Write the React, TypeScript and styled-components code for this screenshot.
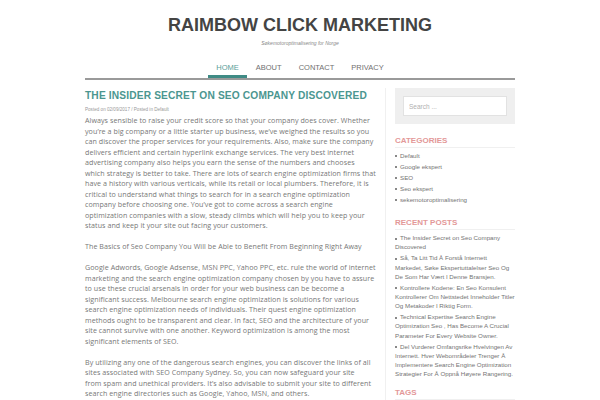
import React from "react";
import styled, { createGlobalStyle } from "styled-components";

const Global = createGlobalStyle`
  html, body { margin: 0; padding: 0; background: #fff; }
  body { overflow: hidden; font-family: "Open Sans", "Liberation Sans", sans-serif; }
  * { box-sizing: border-box; }
`;

const Page = styled.div`
  width: 430px;
  margin: 0 auto;
`;

const Header = styled.header`
  padding-top: 14px;
  text-align: center;
`;

const SiteTitle = styled.h1`
  margin: 0;
  font-family: "Liberation Sans", Arial, sans-serif;
  font-weight: 700;
  font-size: 18px;
  line-height: 22px;
  color: #444;
`;

const Tagline = styled.p`
  margin: 3px 0 0;
  font-family: "Liberation Sans", Arial, sans-serif;
  font-style: italic;
  font-size: 5px;
  line-height: 8px;
  color: #888;
`;

const Nav = styled.nav`
  margin-top: 11px;
  display: flex;
  justify-content: center;
  border-bottom: 2px solid #9a9a9a;
`;

const NavItem = styled.a<{ $active?: boolean }>`
  display: block;
  padding: 5px 8.5px 2px;
  line-height: 10px;
  font-family: "Liberation Sans", Arial, sans-serif;
  font-size: 7.5px;
  font-weight: 400;
  text-transform: uppercase;
  color: ${(p) => (p.$active ? "#5a9e99" : "#707070")};
  border-bottom: 3px solid ${(p) => (p.$active ? "#3f8b85" : "transparent")};
  text-decoration: none;
`;

const Main = styled.div`
  display: flex;
  margin-top: 8px;
`;

const Content = styled.article`
  width: 292px;
  flex: none;
`;

const PostTitle = styled.h2`
  margin: 1px 0 0;
  font-family: "Liberation Sans", Arial, sans-serif;
  font-weight: 700;
  font-size: 10.2px;
  line-height: 14px;
  letter-spacing: 0.15px;
  color: #4b9690;
  white-space: nowrap;
`;

const Meta = styled.div`
  margin-top: 3px;
  font-family: "Liberation Sans", Arial, sans-serif;
  font-size: 4.6px;
  line-height: 7px;
  color: #999;
`;

const Body = styled.div`
  margin-top: 2px;
  font-size: 7.12px;
  line-height: 10.5px;
  letter-spacing: 0.06px;
  color: #777;
  white-space: nowrap;
  p { margin: 0 0 10.5px; }
`;

const Sidebar = styled.aside`
  flex: 1;
  margin-left: 8px;
  border-left: 1px solid #f0f0f0;
  padding-left: 9px;
  font-family: "Liberation Sans", Arial, sans-serif;
`;

const SearchBox = styled.div`
  background: #efefef;
  padding: 8px;
  height: 36px;
`;

const SearchInput = styled.input`
  display: block;
  width: 100%;
  height: 20px;
  border: 1px solid #e2e2e2;
  background: #fff;
  padding: 0 5px;
  font-family: "Liberation Sans", Arial, sans-serif;
  font-size: 6.5px;
  color: #999;
  outline: none;
  &::placeholder { color: #b0b0b0; }
`;

const Widget = styled.section<{ $gap: number }>`
  margin-top: ${(p) => p.$gap}px;
`;

const WidgetTitle = styled.h3`
  margin: 0;
  font-size: 8px;
  font-weight: 700;
  line-height: 12px;
  color: #e39898;
  text-transform: uppercase;
  border-bottom: 1px solid #f0f0f0;
`;

const List = styled.ul`
  list-style: none;
  margin: 3px 0 0;
  padding: 0;
`;

const Item = styled.li`
  font-size: 6.2px;
  line-height: 9.2px;
  color: #747474;
  margin-bottom: 1.8px;
  white-space: nowrap;
  &::before {
    content: "";
    display: inline-block;
    width: 2px;
    height: 2px;
    background: #888;
    margin-right: 3px;
    vertical-align: middle;
  }
`;

function Lines({ lines }: { lines: string[] }) {
  return (
    <>
      {lines.map((l, i) => (
        <React.Fragment key={i}>
          {i > 0 && <br />}
          {l}
        </React.Fragment>
      ))}
    </>
  );
}

const categories = ["Default", "Google ekspert", "SEO", "Seo ekspert", "sekemotoroptimalisering"];
const recent = [
  ["The Insider Secret on Seo Company", "Discovered"],
  ["Så, Ta Litt Tid Å Forstå Internett", "Markedet, Søke Ekspertuttalelser Seo Og", "De Som Har Vært I Denne Bransjen."],
  ["Kontrollere Kodene: En Seo Konsulent", "Kontrollerer Om Nettstedet Inneholder Titler", "Og Metakoder I Riktig Form."],
  ["Technical Expertise Search Engine", "Optimization Seo , Has Become A Crucial", "Parameter For Every Website Owner."],
  [
    "Del Vurderer Omfangsrike Hvelvingen Av",
    "Internett. Hver Webområdeier Trenger Å",
    "Implementere Search Engine Optimization",
    "Strategier For Å Oppnå Høyere Rangering.",
  ],
];

const paragraphs = [
  [
    "Always sensible to raise your credit score so that your company does cover. Whether",
    "you’re a big company or a little starter up business, we’ve weighed the results so you",
    "can discover the proper services for your requirements. Also, make sure the company",
    "delivers efficient and certain hyperlink exchange services. The very best internet",
    "advertising company also helps you earn the sense of the numbers and chooses",
    "which strategy is better to take. There are lots of search engine optimization firms that",
    "have a history with various verticals, while its retail or local plumbers. Therefore, it is",
    "critical to understand what things to search for in a search engine optimization",
    "company before choosing one. You’ve got to come across a search engine",
    "optimization companies with a slow, steady climbs which will help you to keep your",
    "status and keep it your site out facing your customers.",
  ],
  ["The Basics of Seo Company You Will be Able to Benefit From Beginning Right Away"],
  [
    "Google Adwords, Google Adsense, MSN PPC, Yahoo PPC, etc. rule the world of internet",
    "marketing and the search engine optimization company chosen by you have to assure",
    "to use these crucial arsenals in order for your web business can be become a",
    "significant success. Melbourne search engine optimization is solutions for various",
    "search engine optimization needs of individuals. Their quest engine optimization",
    "methods ought to be transparent and clear. In fact, SEO and the architecture of your",
    "site cannot survive with one another. Keyword optimization is among the most",
    "significant elements of SEO.",
  ],
  [
    "By utilizing any one of the dangerous search engines, you can discover the links of all",
    "sites associated with SEO Company Sydney. So, you can now safeguard your site",
    "from spam and unethical providers. It’s also advisable to submit your site to different",
    "search engine directories such as Google, Yahoo, MSN, and others.",
  ],
];

export default function App() {
  return (
    <Page>
      <Global />
      <Header>
        <SiteTitle>RAIMBOW CLICK MARKETING</SiteTitle>
        <Tagline>Søkemotoroptimalisering for Norge</Tagline>
        <Nav>
          <NavItem $active>Home</NavItem>
          <NavItem>About</NavItem>
          <NavItem>Contact</NavItem>
          <NavItem>Privacy</NavItem>
        </Nav>
      </Header>
      <Main>
        <Content>
          <PostTitle>THE INSIDER SECRET ON SEO COMPANY DISCOVERED</PostTitle>
          <Meta>Posted on 02/09/2017 / Posted in Default</Meta>
          <Body>
            {paragraphs.map((p, i) => (
              <p key={i}>
                <Lines lines={p} />
              </p>
            ))}
          </Body>
        </Content>
        <Sidebar>
          <SearchBox>
            <SearchInput placeholder="Search ..." />
          </SearchBox>
          <Widget $gap={11}>
            <WidgetTitle>Categories</WidgetTitle>
            <List>
              {categories.map((c) => (
                <Item key={c}>{c}</Item>
              ))}
            </List>
          </Widget>
          <Widget $gap={13}>
            <WidgetTitle>Recent Posts</WidgetTitle>
            <List>
              {recent.map((r, i) => (
                <Item key={i}>
                  <Lines lines={r} />
                </Item>
              ))}
            </List>
          </Widget>
          <Widget $gap={9}>
            <WidgetTitle>Tags</WidgetTitle>
          </Widget>
        </Sidebar>
      </Main>
    </Page>
  );
}
